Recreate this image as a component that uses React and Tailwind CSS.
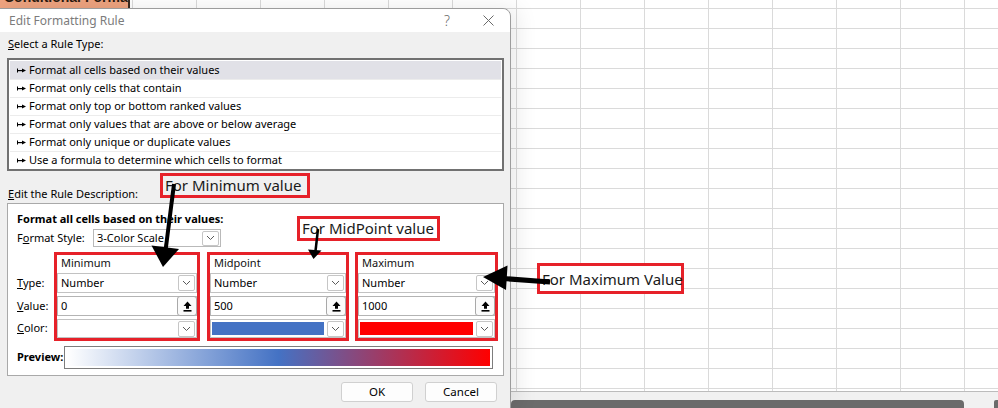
import React from "react";

const Chevron = () => (
  <svg width="9" height="6" viewBox="0 0 9 6">
    <path d="M1 1l3.5 3.5L8 1" fill="none" stroke="#5a5a5a" strokeWidth="1" />
  </svg>
);

const DropBtn = ({ h = "h-[16px]" }) => (
  <div className={`w-[17px] ${h} border border-[#c6c6c6] rounded-[2px] bg-white flex items-center justify-center shrink-0`}>
    <Chevron />
  </div>
);

const UpIcon = () => (
  <svg width="11" height="11" viewBox="0 0 11 11">
    <path d="M5.5 0.5 L1.5 5 H4 V7.8 H7 V5 H9.5 Z" fill="#000" />
    <rect x="1.5" y="9" width="8" height="1.6" fill="#000" />
  </svg>
);

const Bullet = () => (
  <svg width="9" height="7" viewBox="0 0 9 7" className="shrink-0">
    <rect x="0" y="1.5" width="1" height="4" fill="#000" />
    <rect x="0" y="3" width="6" height="1.2" fill="#000" />
    <path d="M5 1.6 L9 3.6 L5 5.6 Z" fill="#000" />
  </svg>
);

const rules = [
  "Format all cells based on their values",
  "Format only cells that contain",
  "Format only top or bottom ranked values",
  "Format only values that are above or below average",
  "Format only unique or duplicate values",
  "Use a formula to determine which cells to format",
];

function Group({ label, value, color, width }) {
  return (
    <div className={`${width} h-[89px] border-[3px] border-[#e62129] flex flex-col`}>
      <div className="h-[16px] leading-[16px] pl-[4px] text-[#111]">{label}</div>
      <div className="mt-[2px] h-[20px] border border-[#c2c2c2] bg-white flex items-center pl-[3px] pr-[1px]">
        <span className="flex-1">Number</span>
        <DropBtn />
      </div>
      <div className="mt-[3px] h-[20px] border border-[#b4b4b4] bg-white flex items-center pl-[3px]">
        <span className="flex-1">{value}</span>
        <div className="w-[20px] h-[20px] -mr-px border border-[#a9a9a9] rounded-[3px] bg-[#fafafa] flex items-center justify-center shrink-0">
          <UpIcon />
        </div>
      </div>
      <div className="mt-[3px] h-[19px] border border-[#c2c2c2] bg-white flex items-center pl-[1px] pr-[1px]">
        <div className="flex-1 h-[13px] mr-[3px]">
          {color === "blue" && <div className="h-full bg-[#4472c4]" />}
          {color === "red" && <div className="h-full bg-[#ff0000]" />}
        </div>
        <DropBtn />
      </div>
    </div>
  );
}

export default function App() {
  return (
    <div className="relative w-[998px] h-[408px] overflow-hidden bg-white font-['Noto_Sans',sans-serif] text-[11px] text-black">
      {/* spreadsheet background */}
      <div className="flex flex-col h-full">
        <div className="h-[391px] bg-white bg-[linear-gradient(to_right,#dadada_1px,transparent_1px),linear-gradient(to_bottom,#dadada_1px,transparent_1px)] bg-[length:64px_20px] bg-[position:4px_8px]" />
        <div className="flex-1 border-t border-[#bcbcbc] bg-[#f1f1f1] flex items-end pl-[511px]">
          <div className="w-[453px] h-[8px] rounded-t-[4px] bg-[#6b6b6b]" />
          <div className="ml-auto w-[4px] h-[8px] rounded-tl-[2px] bg-[#6b6b6b]" />
        </div>
      </div>

      {/* selected orange cell peeking above the dialog */}
      <div className="absolute left-0 top-0 w-[130px] h-[8px] overflow-hidden bg-[#eea37f] border-r-2 border-[#3a2a20]">
        <div className="-mt-[11px] pl-[4px] font-['Liberation_Sans',sans-serif] text-[14px] leading-[16px] font-bold text-[#2a1a10] whitespace-nowrap">
          Conditional Formatting
        </div>
      </div>

      {/* dialog window */}
      <div className="absolute left-[-1px] top-[8px] w-[512px] h-[402px] border border-[#9c9c9c] rounded-tr-[8px] bg-[#f0f0f0] shadow-[6px_0_22px_rgba(0,0,0,0.09)] flex flex-col">
        <div className="h-[23px] bg-white rounded-tr-[8px] flex items-center pl-[9px] pr-[16px]">
          <span className="flex-1 text-[12px] text-[#7c7c7c]">Edit Formatting Rule</span>
          <span className="text-[14px] text-[#6a6a6a] font-light mr-[33px]">?</span>
          <svg width="11" height="11" viewBox="0 0 11 11">
            <path d="M0.5 0.5 L10.5 10.5 M10.5 0.5 L0.5 10.5" stroke="#6a6a6a" strokeWidth="1" />
          </svg>
        </div>

        <div className="pt-[5px] pl-[8px] h-[19px] leading-[14px]">
          <span className="underline">S</span>elect a Rule Type:
        </div>
        <div className="mt-[7px] ml-[7px] w-[497px] h-[113px] border-2 border-[#717171] bg-white pt-[1px] px-[1px]">
          {rules.map((r, i) => (
            <div
              key={r}
              className={`h-[18px] flex items-center gap-[3px] pl-[7px] ${i === 0 ? "bg-[#e1e1e7]" : "border-t border-[#ececec]"}`}
            >
              <Bullet />
              <span>{r}</span>
            </div>
          ))}
        </div>

        <div className="mt-[16px] pl-[8px] h-[14px] leading-[14px]">
          <span className="underline">E</span>dit the Rule Description:
        </div>
        <div className="mt-[2px] ml-[7px] w-[497px] h-[173px] border border-[#a9a9a9] bg-white pt-[8px] pl-[9px] flex flex-col">
          <div className="h-[14px] leading-[14px] font-bold">Format all cells based on their values:</div>
          <div className="mt-[3px] h-[18px] flex items-center">
            <span className="w-[76px]">
              F<span className="underline">o</span>rmat Style:
            </span>
            <div className="w-[128px] h-[18px] border border-[#b9b9b9] bg-white flex items-center pl-[3px] pr-[1px]">
              <span className="flex-1">3-Color Scale</span>
              <DropBtn h="h-[15px]" />
            </div>
          </div>
          <div className="mt-[5px] flex">
            <div className="w-[37px] flex flex-col">
              <div className="mt-[21px] h-[20px] flex items-center">
                <span><span className="underline">T</span>ype:</span>
              </div>
              <div className="mt-[3px] h-[20px] flex items-center">
                <span><span className="underline">V</span>alue:</span>
              </div>
              <div className="mt-[3px] h-[19px] flex items-center">
                <span><span className="underline">C</span>olor:</span>
              </div>
            </div>
            <Group label="Minimum" value="0" color="none" width="w-[146px]" />
            <div className="w-[7px]" />
            <Group label="Midpoint" value="500" color="blue" width="w-[142px]" />
            <div className="w-[6px]" />
            <Group label="Maximum" value="1000" color="red" width="w-[143px]" />
          </div>
          <div className="mt-[5px] h-[23px] flex items-center">
            <span className="w-[47px] font-bold">Preview:</span>
            <div className="w-[429px] h-[23px] border border-[#7d7d7d] p-[2px]">
              <div className="h-full bg-[linear-gradient(to_right,#ffffff,#4472c4_50%,#ff0000)]" />
            </div>
          </div>
        </div>

        <div className="mt-[6px] flex justify-end gap-[12px] pr-[13px]">
          <button className="w-[72px] h-[20px] rounded-[3px] border border-[#d0d0d0] bg-[#fdfdfd] text-[11.5px]">OK</button>
          <button className="w-[72px] h-[20px] rounded-[3px] border border-[#d0d0d0] bg-[#fdfdfd] text-[11.5px]">Cancel</button>
        </div>
      </div>

      {/* annotations */}
      <div className="absolute left-[160px] top-[173px] w-[150px] h-[25px] border-[3px] border-[#e62129] flex items-end pl-[2px] text-[15px] leading-[19px] whitespace-nowrap text-[#1a1a1a]">
        For Minimum value
      </div>
      <div className="absolute left-[297px] top-[216px] w-[143px] h-[25px] border-[3px] border-[#e62129] flex items-end pl-[2px] text-[15px] leading-[19px] whitespace-nowrap text-[#1a1a1a] bg-white">
        For MidPoint value
      </div>
      <div className="absolute left-[537px] top-[263px] w-[147px] h-[31px] border-[3px] border-[#e62129] flex items-center pl-[2px] pt-[2px] text-[15px] leading-[19px] whitespace-nowrap text-[#1a1a1a] bg-white">
        For Maximum Value
      </div>

      <svg className="absolute inset-0 pointer-events-none" width="998" height="408" viewBox="0 0 998 408">
        <line x1="174" y1="184" x2="165.6" y2="250" stroke="#000" strokeWidth="4" />
        <path d="M163 267 L151.5 245.5 L179 249 Z" fill="#000" />
        <line x1="318" y1="229" x2="315.5" y2="251" stroke="#000" strokeWidth="2.5" />
        <path d="M313.5 259 L308 249.5 L321.5 250.5 Z" fill="#000" />
        <line x1="550" y1="282" x2="503" y2="278.5" stroke="#000" strokeWidth="5" />
        <path d="M483 277 L507.5 265.5 L506 290 Z" fill="#000" />
      </svg>
    </div>
  );
}
